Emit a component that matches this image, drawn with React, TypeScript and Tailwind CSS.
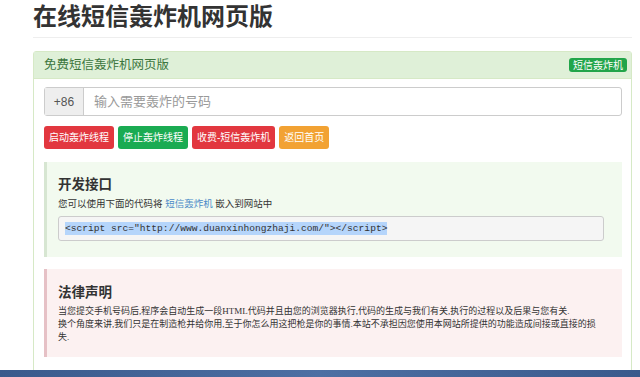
import React from "react";

const sans = "font-['Helvetica_Neue','Liberation_Sans','Noto_Sans_CJK_SC',sans-serif]";

function Btn({ label, color }: { label: string; color: string }) {
  return (
    <span className={`${color} text-white text-[10px] leading-none rounded-[3px] px-[5px] h-[23px] flex items-center`}>
      {label}
    </span>
  );
}

export default function App(): ReturnType<React.FC> {
  return (
    <div className={`${sans} w-[640px] h-[377px] bg-white overflow-hidden flex flex-col text-[#333]`}>
      <div className="flex-1 min-h-0 overflow-hidden pl-[33px] pr-[8px]">
        <h1 className="text-[24px] font-bold leading-none pt-[5px] h-[38px] border-b border-[#eee] text-[#333]">
          在线短信轰炸机网页版
        </h1>
        <div className="mt-[13px] border border-[#d6e9c6] rounded-t-[3px] h-[330px]">
          <div className="bg-[#dff0d8] h-[27px] flex items-center justify-between pl-[10px] pr-[4px] border-b border-[#d6e9c6]">
            <span className="text-[#3c763d] text-[12.5px]">免费短信轰炸机网页版</span>
            <span className="bg-[#22a54a] text-white text-[10px] rounded-[3px] px-[4px] h-[14px] flex items-center">
              短信轰炸机
            </span>
          </div>
          <div className="px-[10px] pt-[8px]">
            <div className="flex h-[29px] border border-[#ccc] rounded-[3px] w-[578px]">
              <span className="w-[39px] bg-[#eee] border-r border-[#ccc] flex items-center justify-center text-[12px] text-[#555]">
                +86
              </span>
              <span className="flex items-center pl-[10px] text-[13px] text-[#999]">输入需要轰炸的号码</span>
            </div>
            <div className="flex gap-[4px] mt-[10px]">
              <Btn label="启动轰炸线程" color="bg-[#e2373f]" />
              <Btn label="停止轰炸线程" color="bg-[#1aab52]" />
              <Btn label="收费-短信轰炸机" color="bg-[#e2373f]" />
              <Btn label="返回首页" color="bg-[#f2a233]" />
            </div>
            <div className="mt-[13px] w-[578px] h-[95px] bg-[#f2faef] border-l-[3px] border-[#d7e6d2] pl-[11px] pr-[18px] pt-[16px]">
              <div className="text-[13.5px] font-bold leading-none">开发接口</div>
              <div className="text-[9.5px] mt-[7px] leading-none text-[#333]">
                您可以使用下面的代码将 <span className="text-[#4a8ac8]">短信轰炸机</span> 嵌入到网站中
              </div>
              <div className="mt-[8px] h-[25px] bg-[#f5f5f5] border border-[#ccc] rounded-[3px] flex items-center pl-[6px]">
                <span className="font-['Liberation_Mono',monospace] text-[9.6px] bg-[#b5d5fb] text-[#333] leading-[13px]">
                  {'<script src="http://www.duanxinhongzhaji.com/"></script>'}
                </span>
              </div>
            </div>
            <div className="mt-[12px] w-[578px] h-[88px] bg-[#fcf1f1] border-l-[3px] border-[#e6c1c6] pl-[11px] pr-[6px] pt-[17px]">
              <div className="text-[13.5px] font-bold leading-none">法律声明</div>
              <p className="text-[9px] leading-[13px] mt-[5px] whitespace-nowrap text-[#333] font-['Liberation_Serif','Noto_Sans_CJK_SC',serif]">
                当您提交手机号码后,程序会自动生成一段HTML代码并且由您的浏览器执行,代码的生成与我们有关,执行的过程以及后果与您有关.
                <br />
                换个角度来讲,我们只是在制造枪并给你用,至于你怎么用这把枪是你的事情.本站不承担因您使用本网站所提供的功能造成间接或直接的损
                <br />
                失.
              </p>
            </div>
          </div>
        </div>
      </div>
      <div className="h-[7px] shrink-0 bg-gradient-to-r from-[#3a5a8c] via-[#4d6fa3] to-[#3a5a8c]" />
    </div>
  );
}
